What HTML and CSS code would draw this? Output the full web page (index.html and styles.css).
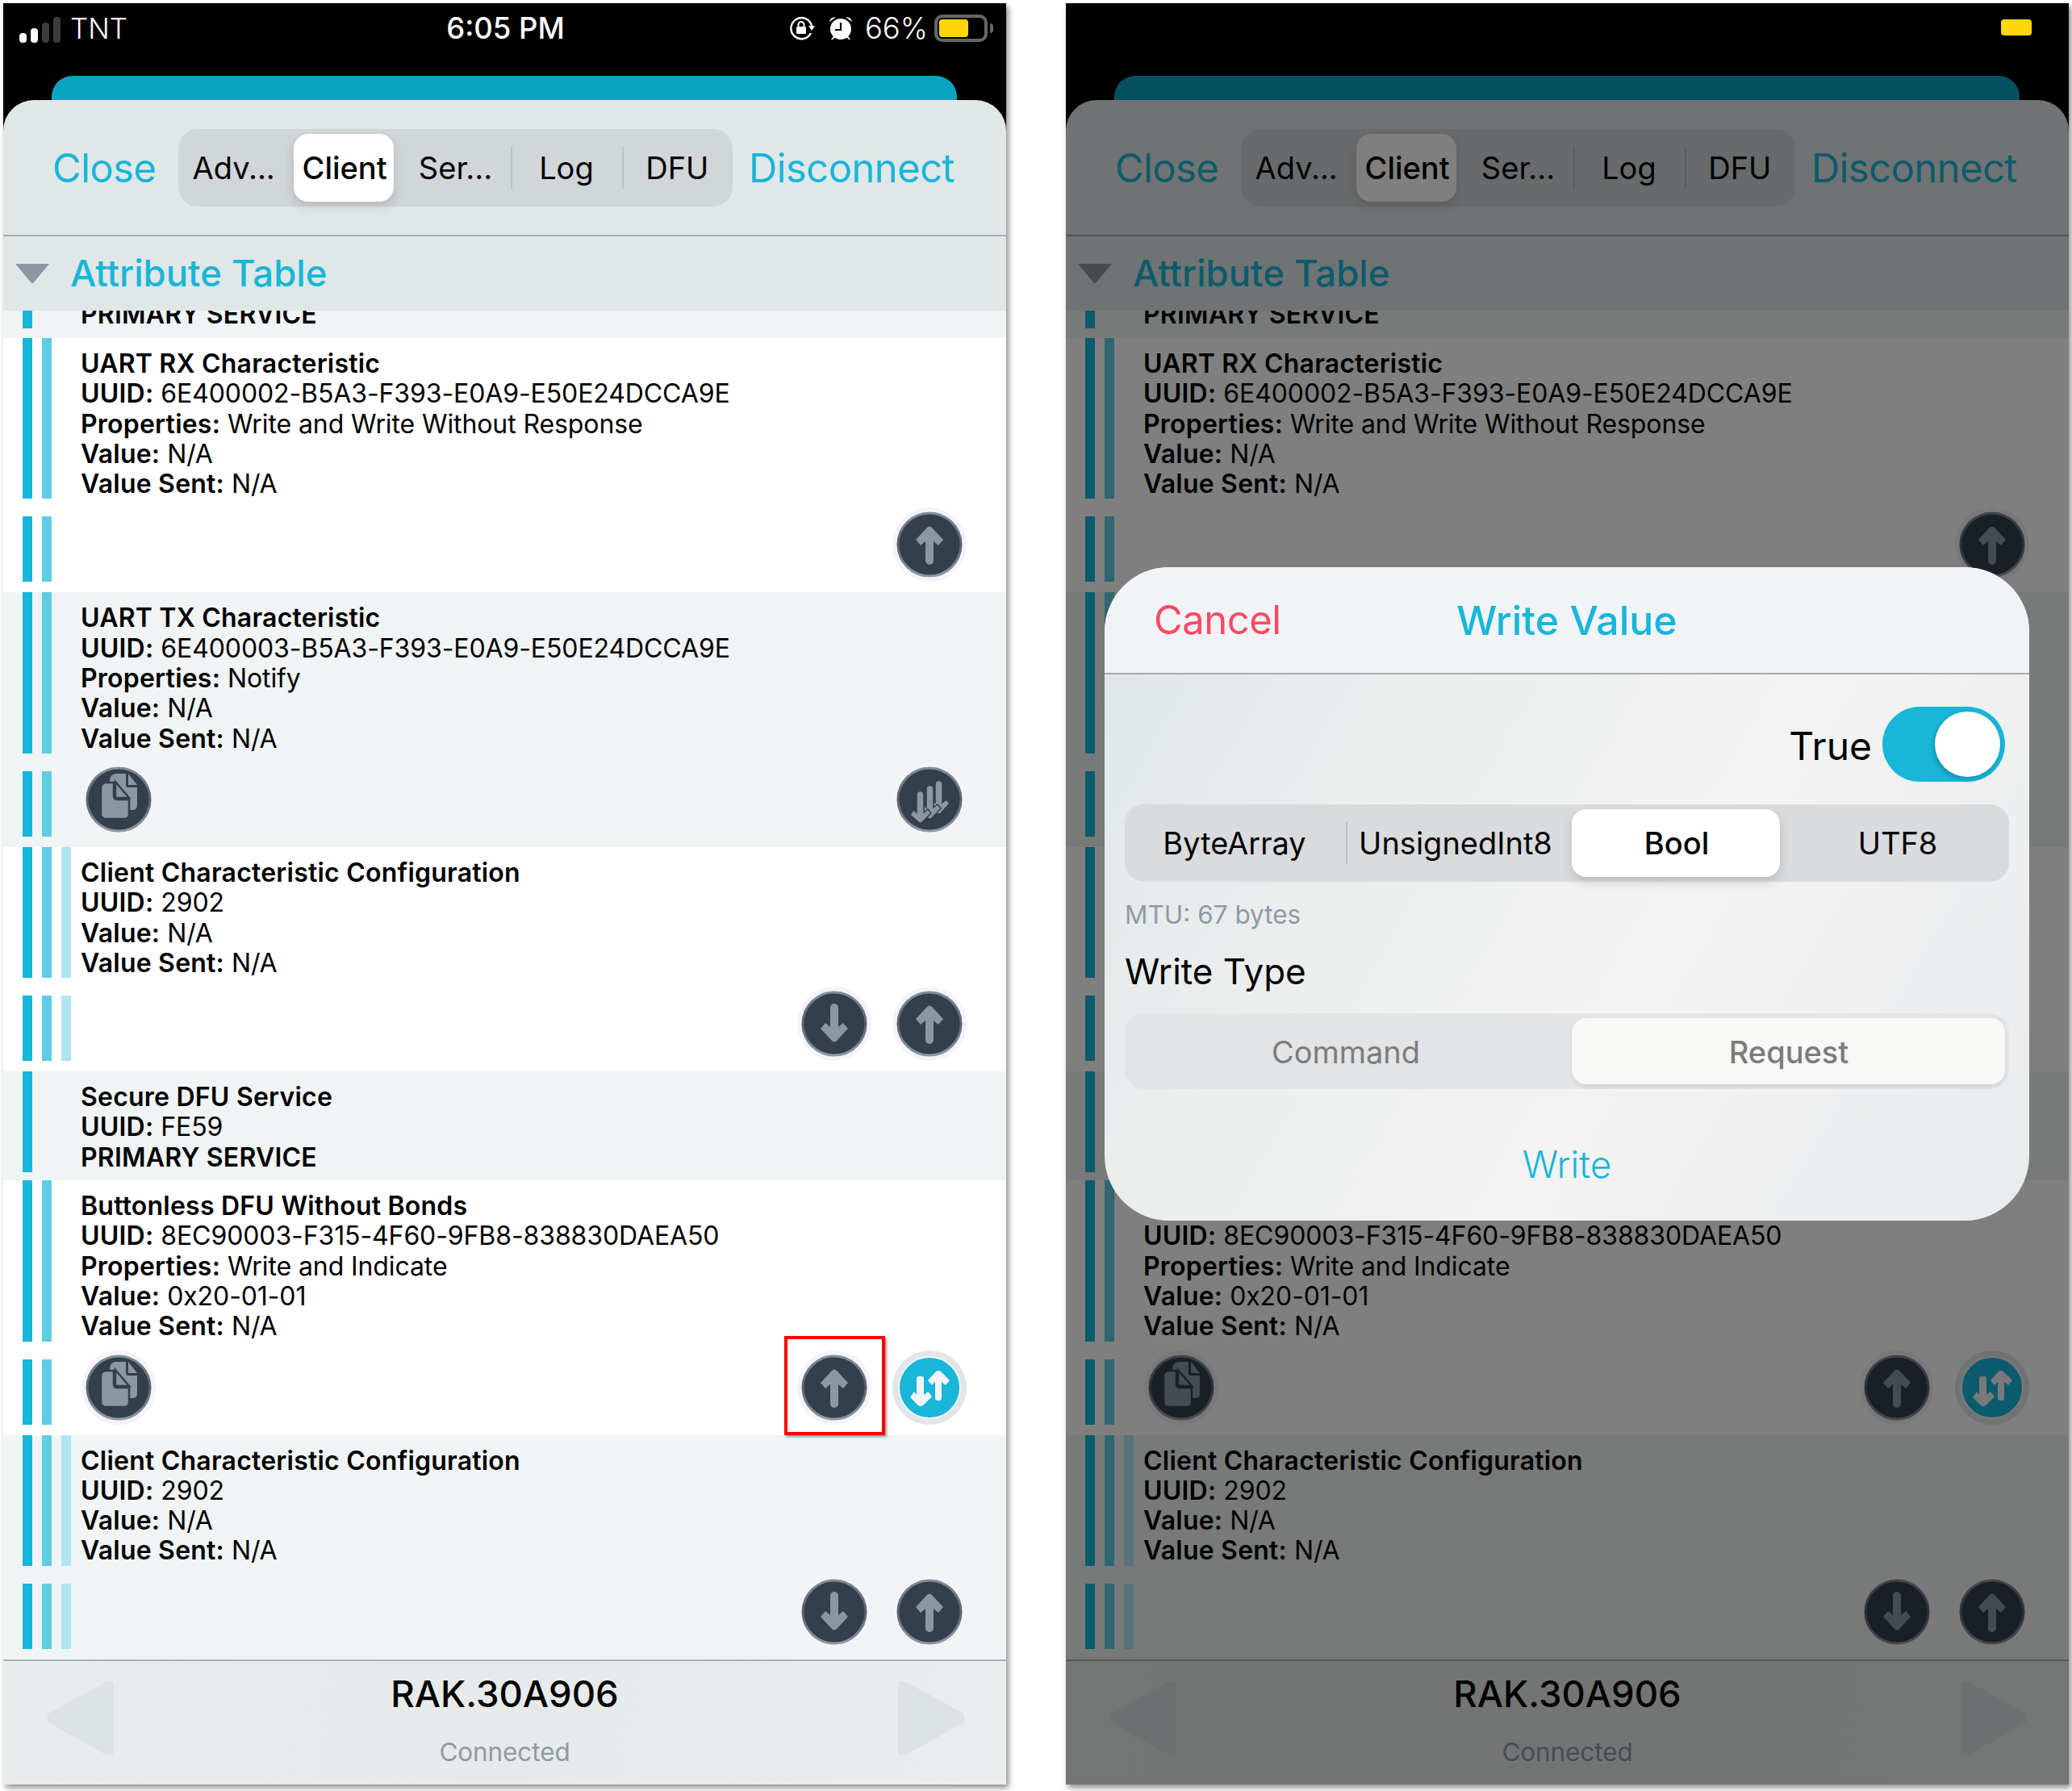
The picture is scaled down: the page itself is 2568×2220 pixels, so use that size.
FILE: index.html
```html
<!DOCTYPE html>
<html lang="en">
<head>
<meta charset="utf-8">
<title>Write Value</title>
<link rel="stylesheet" href="styles.css">
</head>
<body>
<svg class="defs" width="0" height="0" aria-hidden="true">
  <defs>
    <linearGradient id="ring" x1="0" y1="0" x2="0" y2="1"><stop offset="0" stop-color="#7f8d99"/><stop offset=".5" stop-color="#56636e"/><stop offset="1" stop-color="#8d99a4"/></linearGradient>
    <symbol id="base" viewBox="0 0 92 92"><circle cx="46" cy="46" r="46" fill="#f3f3f8"/><circle cx="46" cy="46" r="39" fill="#333f4a" stroke="url(#ring)" stroke-width="3"/></symbol>
    <symbol id="up" viewBox="0 0 92 92"><use href="#base"/><path fill="#8b98a3" d="M41 42V66a5 5 0 0 0 10 0V42l6 5 6-7-14-15q-3-3-6 0L29 40l6 7z"/></symbol>
    <symbol id="down" viewBox="0 0 92 92"><use href="#base"/><path fill="#8b98a3" d="M41 50V26a5 5 0 0 1 10 0V50l6-5 6 7-14 15q-3 3-6 0L29 52l6-7z"/></symbol>
    <symbol id="copy" viewBox="0 0 92 92"><use href="#base"/>
      <path fill="#8b98a3" d="M35 24q0-10 8-10h12v14a3 3 0 0 0 3 3h11v22q0 6-6 6H50z"/>
      <path fill="#8b98a3" d="M58 14l11 14H58z"/>
      <path fill="#8b98a3" stroke="#333f4a" stroke-width="2.500" d="M31 25h9v17a4 4 0 0 0 4 4h15v18q0 6-6 6H31q-7 0-7-6V32q0-7 7-7z"/>
      <path fill="#8b98a3" stroke="#333f4a" stroke-width="2.500" d="M42 24l17 20H42z"/></symbol>
    <symbol id="multi" viewBox="0 0 92 92"><use href="#base"/>
      <g fill="#8b98a3" stroke="#333f4a" stroke-width="1.500">
        <path d="M53 50V27a4.500 4.500 0 0 1 9 0V50l5-4 4 5-11 12q-3 2-5 0L45 53l4-6z"/>
        <path d="M42 56V33a4.500 4.500 0 0 1 9 0V56l5-4 4 5-11 12q-3 2-5 0L34 59l4-6z"/>
        <path d="M30 62V40a4.500 4.500 0 0 1 9 0V62l5-4 4 5-11 11q-3 2-5 0L22 65l4-6z"/>
      </g></symbol>
    <symbol id="swap" viewBox="0 0 92 92"><circle cx="46" cy="46" r="46" fill="#e1e7e8"/><circle cx="46" cy="46" r="38" fill="#18b6d8" stroke="#f3f3f8" stroke-width="2"/>
      <path fill="#f3f3f8" d="M30 55V35a3 3 0 0 1 3-3h3a3 3 0 0 1 3 3V55l5-4 5 6-11 11q-3 2-6 0L22 58l5-7z"/>
      <path fill="#f3f3f8" d="M53 39V59a3 3 0 0 0 3 3h2a3 3 0 0 0 3-3V39l5 4 5-6-11-11q-3-2-6 0L44 37l5 6z"/></symbol>
    <symbol id="wedge-l" viewBox="0 0 84 94"><path fill="#dde2e4" d="M72 3 3 41q-3 6 0 11l69 39q12 6 12-4V6q0-8-12-3z"/></symbol>
    <symbol id="wedge-r" viewBox="0 0 84 94"><path fill="#dde2e4" d="M12 3 81 41q3 6 0 11L12 91Q0 97 0 87V6q0-8 12-3z"/></symbol>
  </defs>
</svg>

<main class="stage">
  <section class="phone">
    <header class="status">
      <div class="status-left">
        <span class="signal"><i class="s1 on"></i><i class="s2 on"></i><i class="s3"></i><i class="s4"></i></span>
        <span class="carrier">TNT</span>
      </div>
      <div class="clock">6:05 PM</div>
      <div class="status-right">
        <svg class="lock" width="32" height="30" viewBox="0 0 32 30"><path fill="none" stroke="#fff" stroke-width="2.400" d="M27 21a13 13 0 1 1 1-9"/><path fill="#fff" d="M24 12h8l-4 6z"/><rect x="9" y="13" width="12" height="9" rx="1.500" fill="#fff"/><path fill="none" stroke="#fff" stroke-width="2" d="M11.500 13v-2.500a3.500 3.500 0 0 1 7 0V13"/></svg>
        <svg class="alarm" width="30" height="30" viewBox="0 0 30 30"><circle cx="15" cy="16" r="13" fill="#fff"/><path fill="#fff" d="M1 7q1-6 8-6zM29 7q-1-6-8-6zM6 25l-3 4h2l3-3zM24 25l3 4h-2l-3-3z"/><path fill="none" stroke="#000" stroke-width="2.200" d="M15 8v9H8"/></svg>
        <span class="percent">66%</span>
        <span class="battery"><i class="fill"></i></span><i class="nub"></i>
      </div>
    </header>
    <div class="peek"></div>
    <div class="card">
      <nav class="topbar">
        <a class="link close">Close</a>
        <div class="seg tabs">
          <span class="cell">Adv...</span><span class="cell on">Client</span><span class="cell">Ser...</span><span class="cell div">Log</span><span class="cell div">DFU</span>
        </div>
        <a class="link disconnect">Disconnect</a>
      </nav>
      <div class="section"><svg class="tri" width="44" height="24" viewBox="0 0 44 24"><path fill="#8b98a3" d="M1 0h42L23 24h-2z"/></svg><h2>Attribute Table</h2></div>
      <div class="list">
        <div class="clip"><div class="bars"><i class="bar b1"></i></div><div class="text"><b>PRIMARY SERVICE</b></div></div>
        <article class="row">
          <div class="info"><div class="bars"><i class="bar b1"></i><i class="bar b2"></i></div><div class="text"><b>UART RX Characteristic</b><br><b>UUID:</b> 6E400002-B5A3-F393-E0A9-E50E24DCCA9E<br><b>Properties:</b> Write and Write Without Response<br><b>Value:</b> N/A<br><b>Value Sent:</b> N/A</div></div>
          <div class="actions"><div class="bars"><i class="bar b1"></i><i class="bar b2"></i></div><div class="btns"><svg class="btn"><use href="#up"/></svg></div></div>
        </article>
        <article class="row alt">
          <div class="info"><div class="bars"><i class="bar b1"></i><i class="bar b2"></i></div><div class="text"><b>UART TX Characteristic</b><br><b>UUID:</b> 6E400003-B5A3-F393-E0A9-E50E24DCCA9E<br><b>Properties:</b> Notify<br><b>Value:</b> N/A<br><b>Value Sent:</b> N/A</div></div>
          <div class="actions"><div class="bars"><i class="bar b1"></i><i class="bar b2"></i></div><svg class="btn"><use href="#copy"/></svg><div class="btns"><svg class="btn"><use href="#multi"/></svg></div></div>
        </article>
        <article class="row">
          <div class="info"><div class="bars"><i class="bar b1"></i><i class="bar b2"></i><i class="bar b3"></i></div><div class="text"><b>Client Characteristic Configuration</b><br><b>UUID:</b> 2902<br><b>Value:</b> N/A<br><b>Value Sent:</b> N/A</div></div>
          <div class="actions"><div class="bars"><i class="bar b1"></i><i class="bar b2"></i><i class="bar b3"></i></div><div class="btns"><svg class="btn"><use href="#down"/></svg><svg class="btn"><use href="#up"/></svg></div></div>
        </article>
        <article class="row alt service">
          <div class="info"><div class="bars"><i class="bar b1"></i></div><div class="text"><b>Secure DFU Service</b><br><b>UUID:</b> FE59<br><b>PRIMARY SERVICE</b></div></div>
        </article>
        <article class="row">
          <div class="info"><div class="bars"><i class="bar b1"></i><i class="bar b2"></i></div><div class="text"><b>Buttonless DFU Without Bonds</b><br><b>UUID:</b> 8EC90003-F315-4F60-9FB8-838830DAEA50<br><b>Properties:</b> Write and Indicate<br><b>Value:</b> 0x20-01-01<br><b>Value Sent:</b> N/A</div></div>
          <div class="actions"><div class="bars"><i class="bar b1"></i><i class="bar b2"></i></div><svg class="btn"><use href="#copy"/></svg><div class="btns"><span class="marked"><svg class="btn"><use href="#up"/></svg></span><svg class="btn"><use href="#swap"/></svg></div></div>
        </article>
        <article class="row alt">
          <div class="info"><div class="bars"><i class="bar b1"></i><i class="bar b2"></i><i class="bar b3"></i></div><div class="text"><b>Client Characteristic Configuration</b><br><b>UUID:</b> 2902<br><b>Value:</b> N/A<br><b>Value Sent:</b> N/A</div></div>
          <div class="actions"><div class="bars"><i class="bar b1"></i><i class="bar b2"></i><i class="bar b3"></i></div><div class="btns"><svg class="btn"><use href="#down"/></svg><svg class="btn"><use href="#up"/></svg></div></div>
        </article>
      </div>
      <footer class="foot">
        <svg class="wedge" width="84" height="94"><use href="#wedge-l"/></svg>
        <div class="device"><div class="name">RAK.30A906</div><div class="state">Connected</div></div>
        <svg class="wedge" width="84" height="94"><use href="#wedge-r"/></svg>
      </footer>
    </div>
  </section>

  <section class="phone">
    <header class="status"></header>
    <div class="peek"></div>
    <div class="card">
      <nav class="topbar">
        <a class="link close">Close</a>
        <div class="seg tabs">
          <span class="cell">Adv...</span><span class="cell on">Client</span><span class="cell">Ser...</span><span class="cell div">Log</span><span class="cell div">DFU</span>
        </div>
        <a class="link disconnect">Disconnect</a>
      </nav>
      <div class="section"><svg class="tri" width="44" height="24" viewBox="0 0 44 24"><path fill="#8b98a3" d="M1 0h42L23 24h-2z"/></svg><h2>Attribute Table</h2></div>
      <div class="list">
        <div class="clip"><div class="bars"><i class="bar b1"></i></div><div class="text"><b>PRIMARY SERVICE</b></div></div>
        <article class="row">
          <div class="info"><div class="bars"><i class="bar b1"></i><i class="bar b2"></i></div><div class="text"><b>UART RX Characteristic</b><br><b>UUID:</b> 6E400002-B5A3-F393-E0A9-E50E24DCCA9E<br><b>Properties:</b> Write and Write Without Response<br><b>Value:</b> N/A<br><b>Value Sent:</b> N/A</div></div>
          <div class="actions"><div class="bars"><i class="bar b1"></i><i class="bar b2"></i></div><div class="btns"><svg class="btn"><use href="#up"/></svg></div></div>
        </article>
        <article class="row alt">
          <div class="info"><div class="bars"><i class="bar b1"></i><i class="bar b2"></i></div><div class="text"><b>UART TX Characteristic</b><br><b>UUID:</b> 6E400003-B5A3-F393-E0A9-E50E24DCCA9E<br><b>Properties:</b> Notify<br><b>Value:</b> N/A<br><b>Value Sent:</b> N/A</div></div>
          <div class="actions"><div class="bars"><i class="bar b1"></i><i class="bar b2"></i></div><svg class="btn"><use href="#copy"/></svg><div class="btns"><svg class="btn"><use href="#multi"/></svg></div></div>
        </article>
        <article class="row">
          <div class="info"><div class="bars"><i class="bar b1"></i><i class="bar b2"></i><i class="bar b3"></i></div><div class="text"><b>Client Characteristic Configuration</b><br><b>UUID:</b> 2902<br><b>Value:</b> N/A<br><b>Value Sent:</b> N/A</div></div>
          <div class="actions"><div class="bars"><i class="bar b1"></i><i class="bar b2"></i><i class="bar b3"></i></div><div class="btns"><svg class="btn"><use href="#down"/></svg><svg class="btn"><use href="#up"/></svg></div></div>
        </article>
        <article class="row alt service">
          <div class="info"><div class="bars"><i class="bar b1"></i></div><div class="text"><b>Secure DFU Service</b><br><b>UUID:</b> FE59<br><b>PRIMARY SERVICE</b></div></div>
        </article>
        <article class="row">
          <div class="info"><div class="bars"><i class="bar b1"></i><i class="bar b2"></i></div><div class="text"><b>Buttonless DFU Without Bonds</b><br><b>UUID:</b> 8EC90003-F315-4F60-9FB8-838830DAEA50<br><b>Properties:</b> Write and Indicate<br><b>Value:</b> 0x20-01-01<br><b>Value Sent:</b> N/A</div></div>
          <div class="actions"><div class="bars"><i class="bar b1"></i><i class="bar b2"></i></div><svg class="btn"><use href="#copy"/></svg><div class="btns"><svg class="btn"><use href="#up"/></svg><svg class="btn"><use href="#swap"/></svg></div></div>
        </article>
        <article class="row alt">
          <div class="info"><div class="bars"><i class="bar b1"></i><i class="bar b2"></i><i class="bar b3"></i></div><div class="text"><b>Client Characteristic Configuration</b><br><b>UUID:</b> 2902<br><b>Value:</b> N/A<br><b>Value Sent:</b> N/A</div></div>
          <div class="actions"><div class="bars"><i class="bar b1"></i><i class="bar b2"></i><i class="bar b3"></i></div><div class="btns"><svg class="btn"><use href="#down"/></svg><svg class="btn"><use href="#up"/></svg></div></div>
        </article>
      </div>
      <footer class="foot">
        <svg class="wedge" width="84" height="94"><use href="#wedge-l"/></svg>
        <div class="device"><div class="name">RAK.30A906</div><div class="state">Connected</div></div>
        <svg class="wedge" width="84" height="94"><use href="#wedge-r"/></svg>
      </footer>
    </div>
    <div class="dim"></div>
    <i class="pill"></i>
    <div class="modal">
      <div class="modal-head"><a class="cancel">Cancel</a><h3>Write Value</h3></div>
      <div class="modal-body">
        <div class="toggle-line"><span class="true">True</span><span class="toggle"><i></i></span></div>
        <div class="seg types">
          <span class="cell">ByteArray</span><span class="cell div">UnsignedInt8</span><span class="cell on">Bool</span><span class="cell">UTF8</span>
        </div>
        <div class="mtu">MTU: 67 bytes</div>
        <div class="wtype">Write Type</div>
        <div class="seg writes">
          <span class="cell">Command</span><span class="cell on">Request</span>
        </div>
        <a class="write">Write</a>
      </div>
    </div>
  </section>
</main>
</body>
</html>
```

FILE: styles.css
```css
*, *::before, *::after { box-sizing: border-box; }
html, body { margin: 0; background: #fff; }
body { font-family: Inter, "Liberation Sans", sans-serif; color: #000; }
.defs { position: absolute; }
.stage { display: flex; gap: 74px; padding: 4px; height: 2220px; }

.phone {
  position: relative; width: 1243px; height: 2208px; background: #000;
  display: flex; flex-direction: column; overflow: visible;
  box-shadow: 3px 4px 7px rgba(0,0,0,.45);
}
.status {
  height: 90px; flex: none; padding: 11px 16px 0 20px; color: #fff;
  display: grid; grid-template-columns: 1fr auto 1fr; align-items: start;
}
.status-left { display: flex; align-items: center; height: 40px; gap: 12px; }
.signal { display: flex; align-items: flex-end; gap: 5px; height: 35px; }
.signal i { width: 9px; background: #3b3b3b; border-radius: 4px; }
.signal .on { background: #fff; }
.s1 { height: 12px; } .s2 { height: 18px; } .s3 { height: 25px; } .s4 { height: 32px; }
.carrier { font-size: 35px; font-weight: 300; line-height: 40px; }
.clock { font-size: 36.500px; font-weight: 500; line-height: 40px; margin-right: 2px; }
.status-right { display: flex; align-items: center; justify-content: flex-end; height: 40px; }
.lock { margin-right: 17px; }
.alarm { margin-right: 15px; }
.percent { font-size: 36.500px; font-weight: 300; line-height: 40px; margin-right: 8px; }
.battery { width: 66px; height: 34px; border: 4px solid #666; border-radius: 10px; padding: 2px; display: block; }
.battery .fill { display: block; width: 36px; height: 22px; background: #ffd60a; border-radius: 4px; }
.nub { width: 4px; height: 12px; background: #666; margin-left: 3px; border-radius: 0 4px 4px 0; }

.peek { flex: none; height: 30px; margin: 0 61px 0 60px; background: #08a4c2; border-radius: 26px 26px 0 0; }
.card {
  flex: 1; min-height: 0; display: flex; flex-direction: column;
  background: #e0e7e7; border-radius: 38px 38px 0 0; overflow: hidden;
}
.topbar {
  flex: none; height: 169px; border-bottom: 2px solid #a7adb0; padding: 36px 0 0 61px;
  display: flex; align-items: flex-start;
}
.link { color: #18b6d8; font-size: 49px; line-height: 97px; font-weight: 400; letter-spacing: -.6px; }
.close { flex: 0 0 156px; }
.disconnect { margin-left: 20px; }
.seg { display: flex; background: #d1d6d9; border-radius: 24px; }
.tabs { width: 687px; height: 96px; }
.cell {
  position: relative; flex: 1; display: flex; align-items: center; justify-content: center;
  font-size: 38px; white-space: nowrap;
}
.cell.div::before { content: ""; position: absolute; left: 0; top: 22px; bottom: 22px; width: 2px; background: #b9bfc2; }
.cell.on { font-weight: 500; isolation: isolate; }
.cell.on::after { content: ""; position: absolute; z-index: -1; inset: 6px 8px 6px 6px; background: #fff; border-radius: 18px; box-shadow: 0 6px 14px rgba(0,0,0,.14); }

.section { flex: none; height: 92px; display: flex; align-items: center; padding-left: 14px; gap: 25px; }
.section h2 { margin: 0; color: #18b6d8; font-size: 45.500px; font-weight: 500; line-height: 60px; }

.list { flex: none; display: flex; flex-direction: column; }
.bars { flex: none; display: flex; gap: 12px; width: 72px; margin-left: 24px; }
.bar { width: 12px; display: block; }
.b1 { background: #18b6d8; } .b2 { background: #5dcde2; } .b3 { background: #aee5f0; }
.text { font-size: 32px; line-height: 37.300px; color: #000; letter-spacing: -.1px; }
.text b { font-weight: 600; letter-spacing: .22px; }

.clip { height: 34px; background: #f0f4f4; display: flex; align-items: flex-end; overflow: hidden; }
.clip .bars { height: 22px; margin-bottom: 12px; }
.clip .text { margin-bottom: 11px; white-space: nowrap; }

.row { background: #fff; padding-bottom: 13px; }
.row.alt { background: #f0f4f4; }
.row.service { padding-bottom: 10px; }
.info { display: flex; }
.info .text { padding-top: 13px; }
.actions { display: flex; align-items: flex-end; height: 92px; margin-top: 11px; padding-right: 49px; }
.actions .bars { height: 81px; margin-right: 1px; }
.btn { width: 92px; height: 92px; display: block; flex: none; }
.btns { margin-left: auto; display: flex; gap: 26px; }
.marked { position: relative; display: block; }
.marked::after {
  content: ""; position: absolute; left: -16px; top: -18px; width: 125px; height: 123px;
  border: 4px solid #f00; box-shadow: 2px 2px 3px rgba(0,0,0,.4);
}

.foot {
  flex: 1; min-height: 0; background: linear-gradient(100deg, #e8ecec, #e6eaea 50%, #e9eded);
  border-top: 2px solid #a9b4b6; display: flex; justify-content: space-between; padding: 24px 50px 0 53px;
}
.wedge { display: block; }
.device { text-align: center; margin: -8px 3px 0 0; }
.name { font-size: 45.500px; font-weight: 500; line-height: 50px; }
.state { font-size: 31.500px; line-height: 40px; margin-top: 27px; color: #8d9ba6; letter-spacing: -.1px; }

.dim { position: absolute; inset: 0; background: rgba(0,0,0,.5); }
.pill { position: absolute; left: 1159px; top: 20px; width: 38px; height: 20px; background: #ffd60a; border-radius: 4px; }

.modal {
  position: absolute; left: 48px; top: 699px; width: 1146px; height: 810px;
  border-radius: 80px; overflow: hidden; display: flex; flex-direction: column;
  background: linear-gradient(120deg, #dfe6e8 0, #eceeee 30%, #f3f3f3 60%, #e9ebed 100%);
}
.modal-head {
  flex: none; height: 133px; background: #f2f3f7; border-bottom: 2px solid #aaabad; position: relative;
  display: flex; align-items: center; justify-content: center;
}
.cancel { position: absolute; left: 61px; color: #fb4a64; font-size: 49px; font-weight: 400; letter-spacing: -.5px; }
.modal-head h3 { margin: 0; color: #18b6d8; font-size: 50px; font-weight: 500; }
.modal-body { flex: 1; padding: 40px 25px 0; display: flex; flex-direction: column; }
.toggle-line { display: flex; align-items: center; justify-content: flex-end; gap: 13px; height: 93px; padding-right: 5px; }
.true { font-size: 48px; padding-top: 3px; }
.toggle { width: 152px; height: 93px; border-radius: 47px; background: #18b6d8; padding: 6px; display: flex; justify-content: flex-end; }
.toggle i { width: 81px; height: 81px; border-radius: 50%; background: #fff; box-shadow: -2px 3px 6px rgba(0,0,0,.2); }
.types { margin-top: 28px; height: 96px; background: #d9dbdd; }
.types .cell { font-size: 38px; padding-right: 2px; }
.types .cell.on::after { inset: 6px 10px 6px 6px; }
.mtu { margin-top: 21px; font-size: 31.500px; line-height: 40px; color: #8d9ba6; }
.wtype { margin-top: 22px; font-size: 44px; line-height: 56px; }
.writes { margin-top: 24px; height: 94px; background: #e2e4e6; color: #7c7c7c; }
.writes .cell { font-size: 38px; padding-top: 2px; }
.writes .cell:first-child { flex: 0 0 554px; padding-right: 6px; }
.writes .cell.on { color: #7c7c7c; font-weight: 500; padding-right: 4px; }
.writes .cell.on::after { background: #f8f8f7; inset: 6px 5px 6px 0; box-shadow: 0 3px 4px rgba(0,0,0,.08); }
.write { margin-top: 65px; text-align: center; color: #18b6d8; font-size: 46px; font-weight: 300; line-height: 56px; }
```
